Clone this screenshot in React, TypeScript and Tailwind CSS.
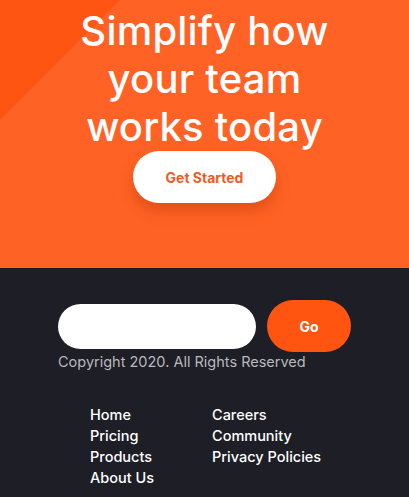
const leftLinks = ["Home", "Pricing", "Products", "About Us"];
const rightLinks = ["Careers", "Community", "Privacy Policies"];

export default function App() {
  return (
    <div className="w-[409px] h-[497px] overflow-hidden font-['Inter','Noto_Sans',sans-serif]">
      {/* hero */}
      <section className="relative h-[268px] bg-[#ff6224] overflow-hidden">
        <div className="absolute left-0 top-0 w-[120px] h-[120px] bg-[#ff5512] [clip-path:polygon(0_0,100%_0,0_100%)]" />
        <div className="relative flex flex-col items-center pt-[7px]">
          <h1 className="text-white text-[40px] leading-[48px] font-medium text-center tracking-[0.2px] w-[290px]">
            Simplify how your team works today
          </h1>
          <button className="mt-[0px] w-[143px] h-[52px] rounded-full bg-white text-[#f25a1f] text-[14px] font-bold shadow-[0_8px_14px_rgba(170,50,0,0.35)]">
            Get Started
          </button>
        </div>
      </section>

      {/* footer */}
      <footer className="h-[229px] bg-[#1d1e26] pt-[32px]">
        <div className="pl-[58px]">
          <div className="flex items-center gap-[11px]">
            <input className="w-[198px] h-[45px] rounded-full bg-white outline-none px-5" />
            <button className="w-[84px] h-[52px] rounded-full bg-[#ff5510] text-white text-[14px] font-bold">
              Go
            </button>
          </div>
          <p className="mt-[0px] text-[14.5px] leading-[20px] text-[#b9b9bd]">Copyright 2020. All Rights Reserved</p>
        </div>
        <div className="mt-[32px] pl-[90px] grid grid-cols-[122px_auto] text-white text-[14.5px] font-medium leading-[21px]">
          <ul>
            {leftLinks.map((l) => (
              <li key={l}>{l}</li>
            ))}
          </ul>
          <ul>
            {rightLinks.map((l) => (
              <li key={l}>{l}</li>
            ))}
          </ul>
        </div>
      </footer>
    </div>
  );
}
